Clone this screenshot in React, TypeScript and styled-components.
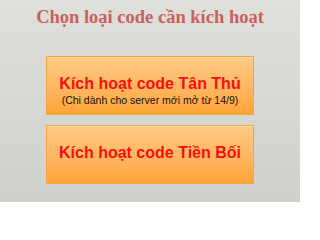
import { createGlobalStyle, styled } from "styled-components";

const GlobalStyle = createGlobalStyle`
    html, body {
        margin: 0;
        padding: 0;
    }
    body {
        width: 300px;
        height: 202px;
        overflow: hidden;
    }
`;

interface CodeOption {
    label: string;
    note?: string;
}

const options: Array<CodeOption> = [
    { label: "Kích hoạt code Tân Thủ", note: "(Chi dành cho server mới mở từ 14/9)" },
    { label: "Kích hoạt code Tiền Bối" },
];

export default function App() {
    return (
        <>
            <GlobalStyle />
            <Panel>
                <Title>Chọn loại code cần kích hoạt</Title>
                <OptionList>
                    {options.map((option) => (
                        <OptionButton key={option.label}>
                            <OptionLabel>{option.label}</OptionLabel>
                            {option.note && <OptionNote>{option.note}</OptionNote>}
                        </OptionButton>
                    ))}
                </OptionList>
            </Panel>
        </>
    );
}

const Panel = styled.div`
    width: 300px;
    height: 202px;
    box-sizing: border-box;
    padding-top: 6px;
    display: flex;
    flex-direction: column;
    align-items: center;
    background: linear-gradient(180deg, #dfdfdb 0%, #d7d9d4 50%, #ced1cb 100%);
`;

const Title = styled.h1`
    margin: 0;
    font-family: "Liberation Serif", serif;
    font-weight: bold;
    font-size: 18.5px;
    line-height: 22px;
    color: #c9625a;
`;

const OptionList = styled.div`
    margin-top: 28px;
    display: flex;
    flex-direction: column;
    gap: 10px;
`;

const OptionButton = styled.button`
    width: 208px;
    height: 59px;
    box-sizing: border-box;
    padding: 17px 0 0;
    border: 1px solid #f2a540;
    box-shadow: inset 0 1px 0 #ffd9a0;
    background: linear-gradient(180deg, #ffcb85 0%, #ffb45c 60%, #ffa437 100%);
    display: flex;
    flex-direction: column;
    align-items: center;
    justify-content: flex-start;
    cursor: pointer;
`;

const OptionLabel = styled.span`
    font-family: "Liberation Sans", Arial, sans-serif;
    font-weight: bold;
    font-size: 16px;
    line-height: 19px;
    color: #f50f0f;
`;

const OptionNote = styled.span`
    font-family: "Liberation Sans", Arial, sans-serif;
    font-size: 10.5px;
    line-height: 14px;
    color: #111;
`;
